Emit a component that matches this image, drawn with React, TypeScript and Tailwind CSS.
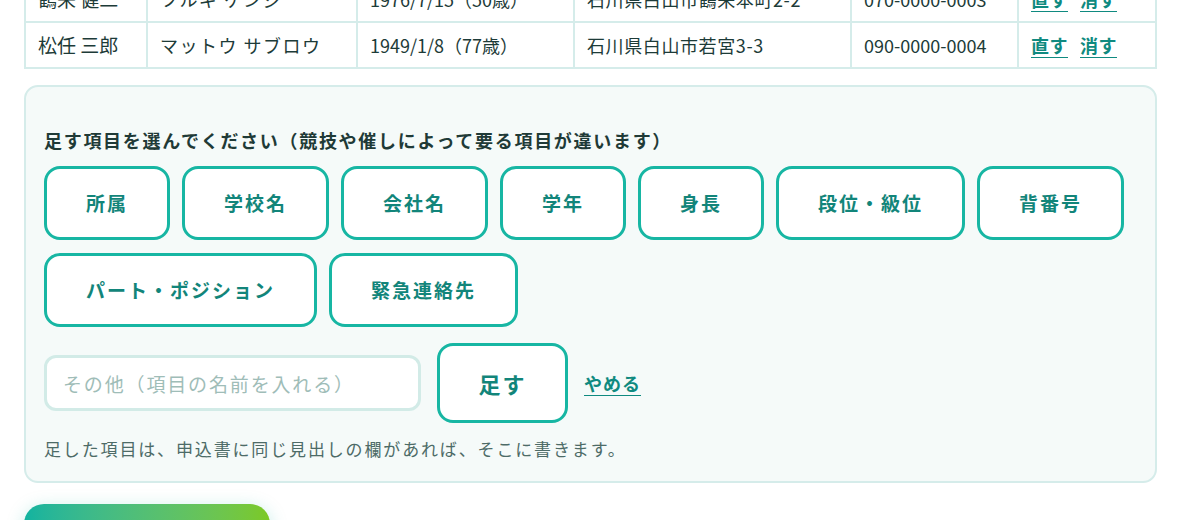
import React from "react";

const members = [
  {
    name: "鶴来 健二",
    kana: "ツルギ ケンジ",
    birth: "1976/7/15（50歳）",
    address: "石川県白山市鶴来本町2-2",
    phone: "070-0000-0003",
  },
  {
    name: "松任 三郎",
    kana: "マットウ サブロウ",
    birth: "1949/1/8（77歳）",
    address: "石川県白山市若宮3-3",
    phone: "090-0000-0004",
  },
];

const fields = [
  "所属",
  "学校名",
  "会社名",
  "学年",
  "身長",
  "段位・級位",
  "背番号",
  "パート・ポジション",
  "緊急連絡先",
];

function MemberTable() {
  return (
    <table className="w-full border-collapse text-[#1d3b38]">
      <colgroup>
        <col className="w-[122px]" />
        <col className="w-[210px]" />
        <col className="w-[217px]" />
        <col className="w-[277px]" />
        <col className="w-[167px]" />
        <col />
      </colgroup>
      <tbody>
        {members.map((m) => (
          <tr key={m.phone} className="h-[46px] bg-white">
            <td className="border-2 border-[#d5ecea] px-[12px] text-[19px]">{m.name}</td>
            <td className="border-2 border-[#d5ecea] px-[12px] text-[18px] tracking-[1.5px]">{m.kana}</td>
            <td className="border-2 border-[#d5ecea] px-[12px] text-[18px]">{m.birth}</td>
            <td className="border-2 border-[#d5ecea] px-[12px] text-[18px] tracking-[0.6px]">{m.address}</td>
            <td className="border-2 border-[#d5ecea] px-[12px] text-[18px]">{m.phone}</td>
            <td className="border-2 border-[#d5ecea] px-[12px]">
              <div className="flex gap-[12px] text-[18px] font-bold tracking-[0.5px] text-[#0f8a80]">
                <a href="#" className="underline underline-offset-4">直す</a>
                <a href="#" className="underline underline-offset-4">消す</a>
              </div>
            </td>
          </tr>
        ))}
      </tbody>
    </table>
  );
}

function FieldPicker() {
  return (
    <section className="mt-[16px] rounded-[14px] border-2 border-[#d5ecea] bg-[#f5faf9] px-[18px] pt-[40px] pb-[19px]">
      <h3 className="text-[18px] font-bold tracking-[1.7px] text-[#1f3a37]">
        足す項目を選んでください（競技や催しによって要る項目が違います）
      </h3>
      <div className="mt-[12px] flex flex-wrap gap-x-[12px] gap-y-[13px]">
        {fields.map((f) => (
          <button
            key={f}
            className="h-[74px] rounded-[16px] border-[3px] border-[#17b6a3] bg-white px-[39px] text-[19px] font-bold tracking-[2px] text-[#12857a]"
          >
            {f}
          </button>
        ))}
      </div>
      <div className="mt-[16px] flex items-center gap-[16px]">
        <input
          placeholder="その他（項目の名前を入れる）"
          className="h-[56px] w-[377px] rounded-[12px] border-[3px] border-[#d2ebe7] bg-white px-[16px] text-[19px] tracking-[1.85px] text-[#1d3b38] outline-none placeholder:text-[#9fbdb8]"
        />
        <button className="h-[80px] w-[131px] rounded-[16px] border-[3px] border-[#17b6a3] bg-white text-[22px] font-bold tracking-[2px] text-[#12857a]">
          足す
        </button>
        <a href="#" className="text-[18px] font-bold tracking-[1px] text-[#0f8a80] underline underline-offset-4">
          やめる
        </a>
      </div>
      <p className="mt-[13px] text-[17px] tracking-[1.85px] text-[#4d6b67]">
        足した項目は、申込書に同じ見出しの欄があれば、そこに書きます。
      </p>
    </section>
  );
}

export default function App() {
  return (
    <div
      className="min-h-[520px] overflow-hidden bg-white"
      style={{ fontFamily: '"Noto Sans CJK JP", "Noto Sans", sans-serif' }}
    >
      <div className="mx-[24px] mt-[-25px] w-[1133px]">
        <MemberTable />
        <FieldPicker />
        <button className="mt-[21px] h-[60px] w-[246px] rounded-[20px] bg-gradient-to-r from-[#0fb3a0] to-[#7cc922] text-[20px] font-bold text-white shadow-[0_4px_18px_rgba(16,180,160,0.25)]">
          申し込む
        </button>
      </div>
    </div>
  );
}
